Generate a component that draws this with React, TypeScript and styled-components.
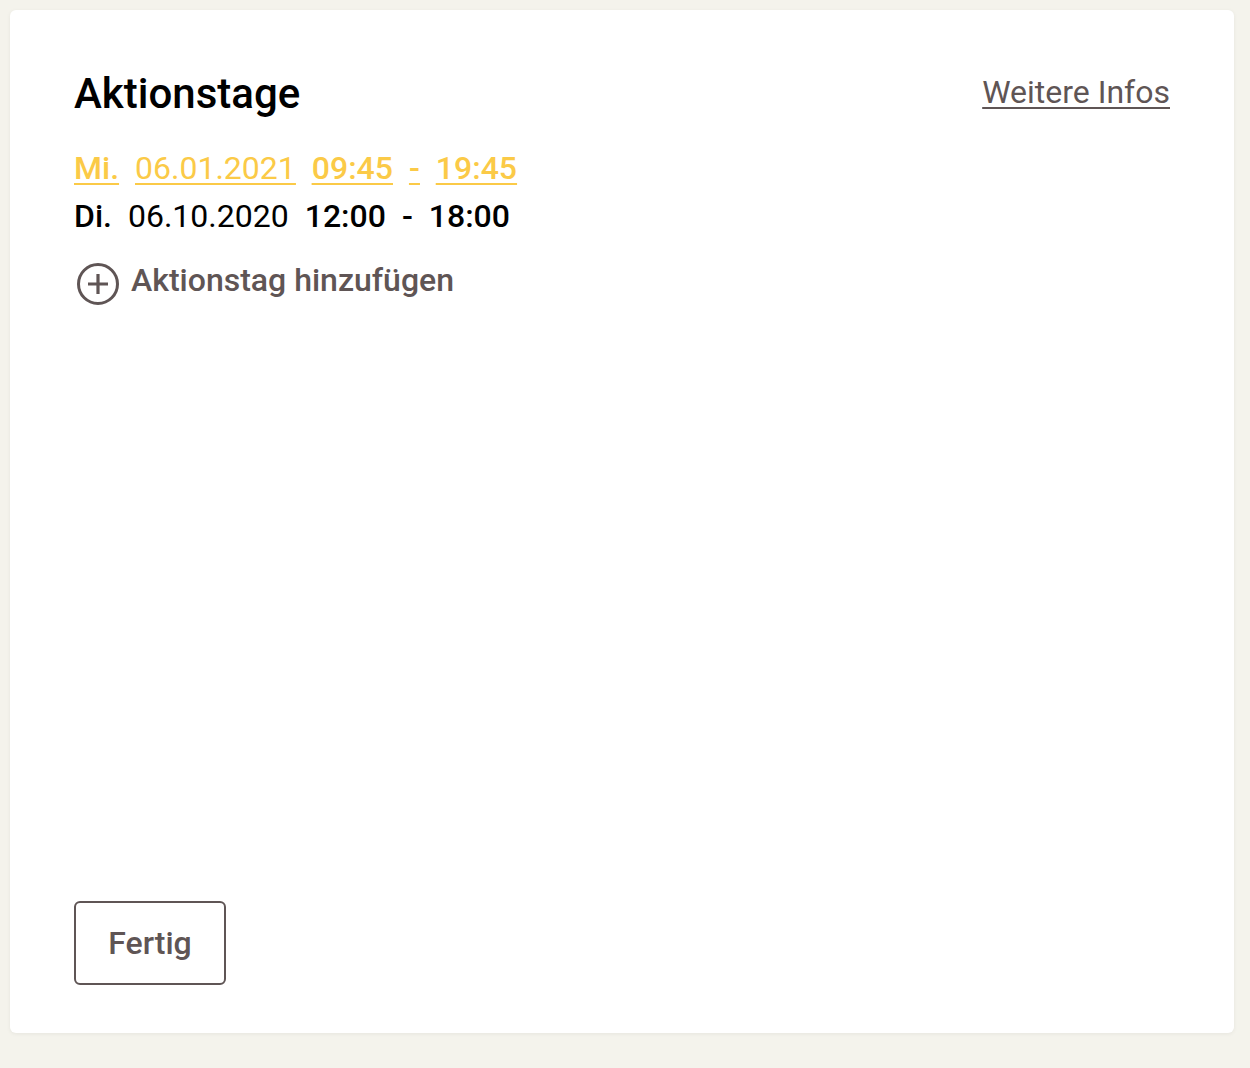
import styled, { createGlobalStyle } from "styled-components"

const GlobalStyle = createGlobalStyle`
    body {
        margin: 0;
        background: #f4f3ec;
        font-family: Roboto, "Liberation Sans", sans-serif;
    }
`

type Day = {
    weekday: string
    date: string
    from: string
    to: string
    active?: boolean
}

const days: Day[] = [
    { weekday: "Mi.", date: "06.01.2021", from: "09:45", to: "19:45", active: true },
    { weekday: "Di.", date: "06.10.2020", from: "12:00", to: "18:00" }
]

export default function App() {
    return (
        <Page>
            <GlobalStyle />
            <Card>
                <Header>
                    <Title>Aktionstage</Title>
                    <InfoLink href="#">Weitere Infos</InfoLink>
                </Header>

                <DayList>
                    {days.map((day) => (
                        <DayRow key={day.date} $active={!!day.active}>
                            <Part $bold>{day.weekday}</Part>
                            <Part>{day.date}</Part>
                            <Part $bold>{day.from}</Part>
                            <Part $bold>-</Part>
                            <Part $bold>{day.to}</Part>
                        </DayRow>
                    ))}
                </DayList>

                <AddButton>
                    <PlusIcon width="42" height="42" viewBox="0 0 42 42" fill="none">
                        <circle cx="21" cy="21" r="19.5" stroke="#5f5555" strokeWidth="3" />
                        <path d="M21 11v20M11 21h20" stroke="#5f5555" strokeWidth="3.2" />
                    </PlusIcon>
                    Aktionstag hinzufügen
                </AddButton>

                <Footer>
                    <DoneButton>Fertig</DoneButton>
                </Footer>
            </Card>
        </Page>
    )
}

const Page = styled.div`
    padding: 10px 16px 35px 10px;
`

const Card = styled.div`
    background: #ffffff;
    border-radius: 6px;
    box-shadow: 0 1px 4px rgba(0, 0, 0, 0.06);
    min-height: 1023px;
    box-sizing: border-box;
    padding: 64px 64px 48px 64px;
    display: flex;
    flex-direction: column;
`

const Header = styled.div`
    display: flex;
    justify-content: space-between;
    align-items: flex-start;
`

const Title = styled.h2`
    margin: 0;
    font-size: 42px;
    font-weight: 500;
    color: #000000;
    line-height: 40px;
`

const InfoLink = styled.a`
    font-size: 32px;
    line-height: 36px;
    color: #5f5555;
    text-decoration: underline;
    text-underline-offset: 4px;
    text-decoration-thickness: 2px;
`

const DayList = styled.div`
    display: flex;
    flex-direction: column;
    margin-top: 30px;
`

const DayRow = styled.div<{ $active: boolean }>`
    display: flex;
    gap: 16px;
    font-size: 32px;
    line-height: 48px;
    color: ${({ $active }) => ($active ? "#fbca47" : "#000000")};
    text-decoration: ${({ $active }) => ($active ? "underline" : "none")};
    text-underline-offset: 4px;
    text-decoration-thickness: 2px;
`

const Part = styled.span<{ $bold?: boolean }>`
    font-weight: ${({ $bold }) => ($bold ? 500 : 400)};
    text-decoration: inherit;
`

const AddButton = styled.button`
    display: flex;
    align-items: center;
    gap: 12px;
    align-self: flex-start;
    margin-top: 15px;
    padding: 0 0 0 3px;
    background: none;
    border: none;
    font-family: inherit;
    font-size: 32px;
    line-height: 48px;
    font-weight: 500;
    color: #5f5555;
    cursor: pointer;
`

const PlusIcon = styled.svg`
    margin-top: 8px;
    flex-shrink: 0;
`

const Footer = styled.div`
    margin-top: auto;
`

const DoneButton = styled.button`
    width: 152px;
    height: 84px;
    background: #ffffff;
    border: 2px solid #5f5555;
    border-radius: 6px;
    font-family: inherit;
    font-size: 32px;
    font-weight: 500;
    color: #5f5555;
    cursor: pointer;
`
